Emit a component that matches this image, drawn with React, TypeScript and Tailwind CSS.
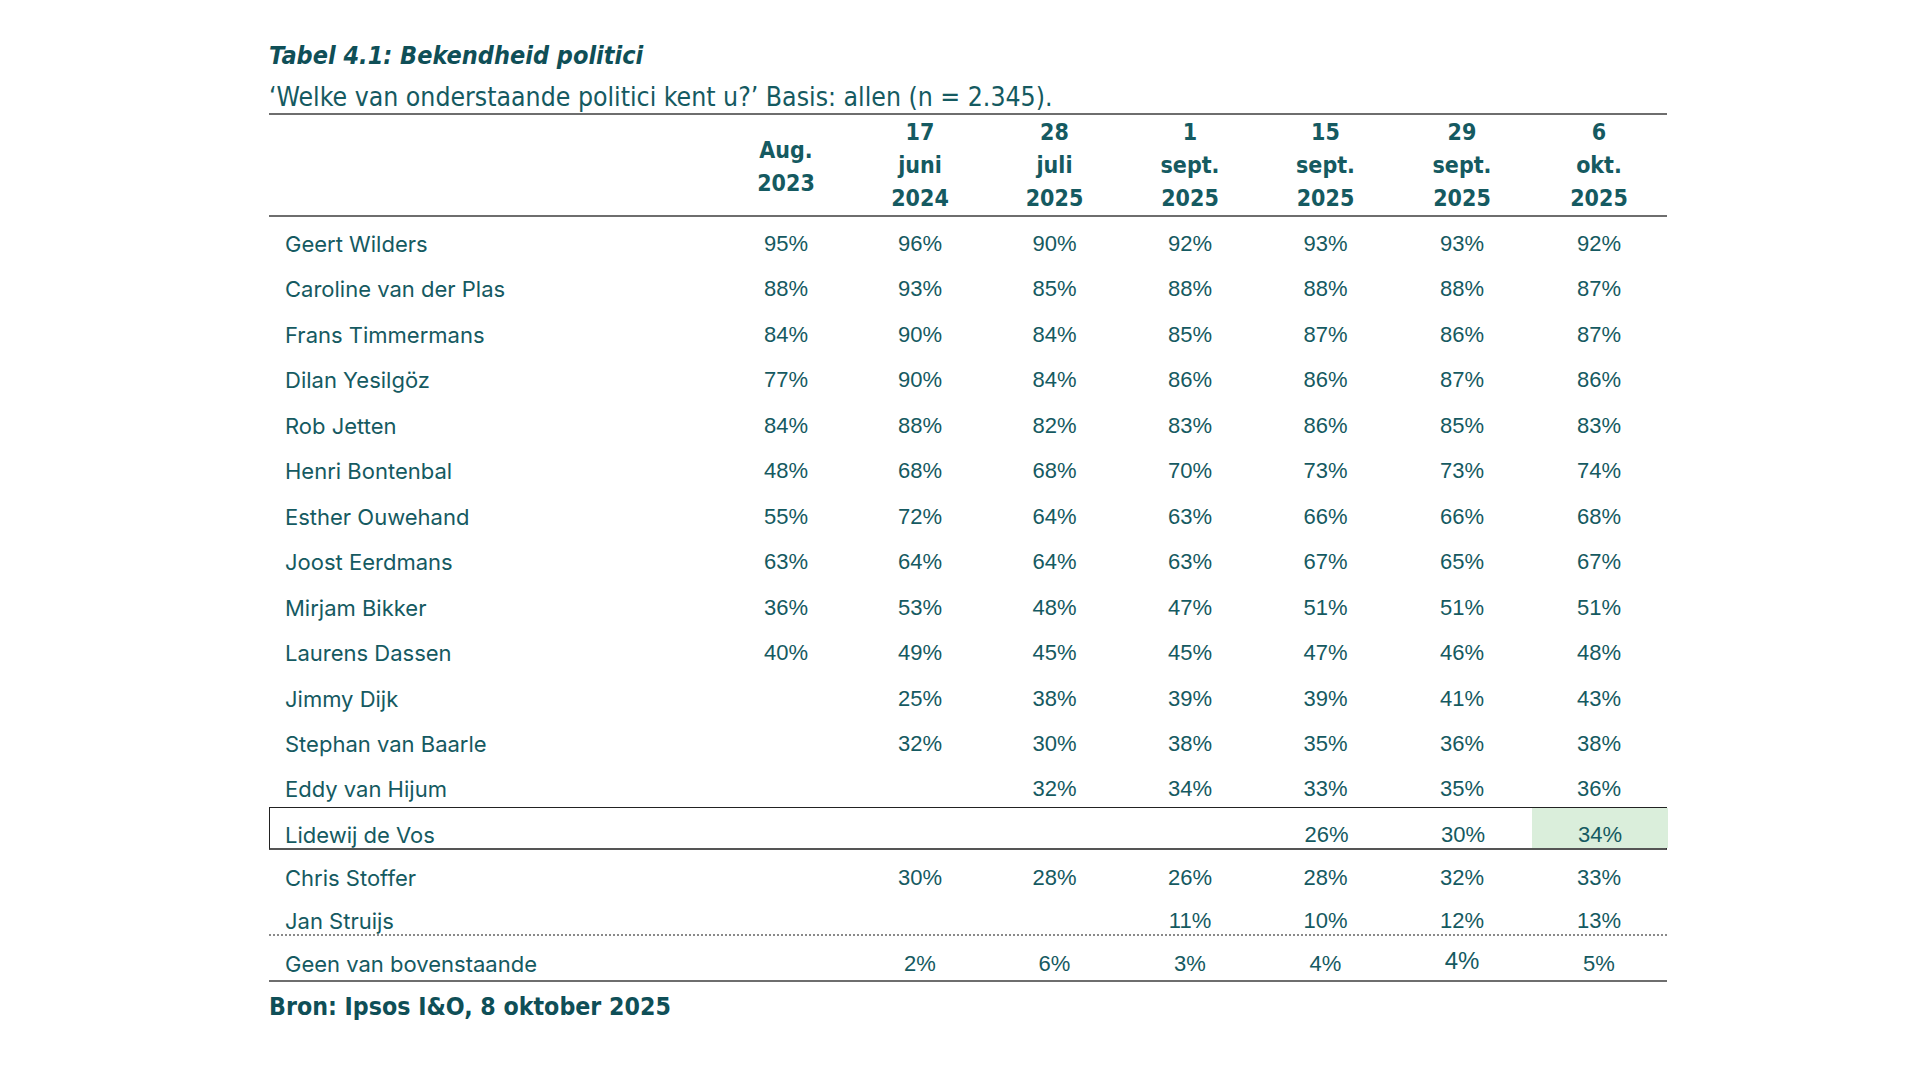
import React from "react";

type Row = { name: string; v: (string | null)[] };

const rows: Row[] = [
  { name: "Geert Wilders", v: ["95%", "96%", "90%", "92%", "93%", "93%", "92%"] },
  { name: "Caroline van der Plas", v: ["88%", "93%", "85%", "88%", "88%", "88%", "87%"] },
  { name: "Frans Timmermans", v: ["84%", "90%", "84%", "85%", "87%", "86%", "87%"] },
  { name: "Dilan Yesilgöz", v: ["77%", "90%", "84%", "86%", "86%", "87%", "86%"] },
  { name: "Rob Jetten", v: ["84%", "88%", "82%", "83%", "86%", "85%", "83%"] },
  { name: "Henri Bontenbal", v: ["48%", "68%", "68%", "70%", "73%", "73%", "74%"] },
  { name: "Esther Ouwehand", v: ["55%", "72%", "64%", "63%", "66%", "66%", "68%"] },
  { name: "Joost Eerdmans", v: ["63%", "64%", "64%", "63%", "67%", "65%", "67%"] },
  { name: "Mirjam Bikker", v: ["36%", "53%", "48%", "47%", "51%", "51%", "51%"] },
  { name: "Laurens Dassen", v: ["40%", "49%", "45%", "45%", "47%", "46%", "48%"] },
  { name: "Jimmy Dijk", v: [null, "25%", "38%", "39%", "39%", "41%", "43%"] },
  { name: "Stephan van Baarle", v: [null, "32%", "30%", "38%", "35%", "36%", "38%"] },
];

const headers: string[][] = [
  ["Aug.", "2023"],
  ["17", "juni", "2024"],
  ["28", "juli", "2025"],
  ["1", "sept.", "2025"],
  ["15", "sept.", "2025"],
  ["29", "sept.", "2025"],
  ["6", "okt.", "2025"],
];

const GRID = "grid grid-cols-[450px_134px_134px_135px_136px_135px_138px_136px]";
const NAME = "pl-4 font-['Inter',sans-serif] text-[22px] leading-[26px]";
const NUM = "text-center font-['Liberation_Sans',Arial,sans-serif] text-[22px] leading-[26px]";
const NARROW = "font-['Liberation_Sans_Narrow','DejaVu_Sans_Condensed',sans-serif]";

function Cells({ v }: { v: (string | null)[] }) {
  return (
    <>
      {v.map((x, i) => (
        <div key={i} className={NUM}>
          {x ?? ""}
        </div>
      ))}
    </>
  );
}

export default function App() {
  return (
    <div className="w-[1920px] h-[1080px] bg-white text-[#155a61] overflow-hidden">
      <div className="ml-[269px] w-[1398px] pt-[40px]">
        <div className={`${NARROW} italic font-bold text-[25px] leading-[32px] text-[#0f4f57]`}>
          Tabel 4.1: Bekendheid politici
        </div>
        <div className={`${NARROW} text-[26.4px] leading-[30px] mt-[10px]`}>
          ‘Welke van onderstaande politici kent u?’ Basis: allen (n = 2.345).
        </div>
        {/* header */}
        <div className={`${GRID} mt-[1px] border-t-[2px] border-b-[2px] border-[#6e6e6e] h-[104px]`}>
          <div />
          {headers.map((h, i) => (
            <div
              key={i}
              className={`flex flex-col justify-end items-center ${NARROW} font-bold text-[23px] leading-[33px]`}
            >
              {h.length === 2 ? (
                <div className="flex flex-col items-center pb-[15px]">
                  {h.map((t, j) => (
                    <div key={j}>{t}</div>
                  ))}
                </div>
              ) : (
                h.map((t, j) => <div key={j}>{t}</div>)
              )}
            </div>
          ))}
        </div>
        {/* body */}
        <div className="pt-[4px]">
          {rows.map((r) => (
            <div key={r.name} className={`${GRID} h-[45.5px] items-center`}>
              <div className={NAME}>{r.name}</div>
              <Cells v={r.v} />
            </div>
          ))}
          <div className={`${GRID} h-[40px] items-center pt-[4px]`}>
            <div className={NAME}>Eddy van Hijum</div>
            <Cells v={[null, null, "32%", "34%", "33%", "35%", "36%"]} />
          </div>
          <div className={`${GRID} h-[43px] border border-[#222] border-b-[2px] border-b-[#555] items-stretch`}>
            <div className={`${NAME} pl-[15px] flex items-end`}>Lidewij de Vos</div>
            {[null, null, null, null, "26%", "30%"].map((x, i) => (
              <div key={i} className={`${NUM} flex items-end justify-center`}>
                {x ?? ""}
              </div>
            ))}
            <div className={`${NUM} flex items-end justify-center bg-[#daeedb]`}>34%</div>
          </div>
          <div className={`${GRID} h-[50px] items-center pt-[6px]`}>
            <div className={NAME}>Chris Stoffer</div>
            <Cells v={[null, "30%", "28%", "26%", "28%", "32%", "33%"]} />
          </div>
          <div className={`${GRID} h-[36px] items-end border-b-[2px] border-dotted border-[#8a8a8a]`}>
            <div className={NAME}>Jan Struijs</div>
            <Cells v={[null, null, null, "11%", "10%", "12%", "13%"]} />
          </div>
          <div className={`${GRID} h-[46px] items-end pb-[3px] border-b-[2px] border-[#6e6e6e]`}>
            <div className={NAME}>Geen van bovenstaande</div>
            <div className={NUM} />
            <div className={NUM}>2%</div>
            <div className={NUM}>6%</div>
            <div className={NUM}>3%</div>
            <div className={NUM}>4%</div>
            <div className="text-center font-['Liberation_Sans',Arial,sans-serif] text-[24px] leading-[28px] pb-[2px]">4%</div>
            <div className={NUM}>5%</div>
          </div>
        </div>
        <div className={`mt-[10px] ${NARROW} font-bold text-[24.7px] leading-[30px] text-[#0f4f57]`}>
          Bron: Ipsos I&amp;O, 8 oktober 2025
        </div>
      </div>
    </div>
  );
}
